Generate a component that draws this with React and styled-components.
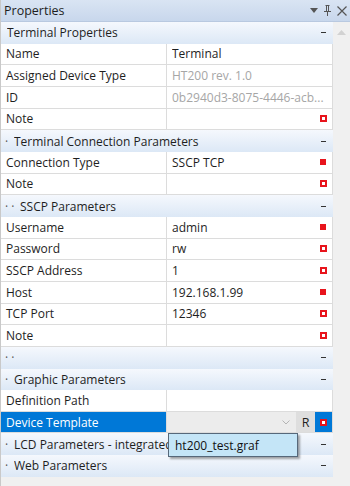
import styled, {createGlobalStyle} from 'styled-components';

const GlobalStyle = createGlobalStyle`
  html, body {
    margin: 0;
    padding: 0;
    background: #f0f0f0;
  }
  body {
    font-family: "Open Sans", "Liberation Sans", sans-serif;
    font-size: 12px;
    color: #1e1e1e;
  }
`;

const ROW_H = '21.667px';

const Panel = styled.div`
  width: 350px;
  height: 486px;
  display: flex;
  flex-direction: column;
  background: #f0f0f0;
  border-left: 1px solid #c9c9c9;
  box-sizing: border-box;
  overflow: hidden;
`;

const TitleBar = styled.div`
  height: 22px;
  flex: none;
  display: flex;
  align-items: center;
  padding: 0 3px 0 3px;
  background: linear-gradient(#d9e4f3, #c8d7ec);
  border-bottom: 1px solid #b9c9e0;
  box-sizing: border-box;
  font-size: 12.5px;
`;

const Title = styled.span`
  flex: 1;
`;

const TitleIcons = styled.div`
  display: flex;
  align-items: center;
  gap: 6px;
  color: #4a4a4a;
`;

const Body = styled.div`
  display: flex;
  position: relative;
`;

const Grid = styled.div`
  width: 333px;
  display: flex;
  flex-direction: column;
`;

const ScrollTrack = styled.div`
  width: 17px;
  display: flex;
  justify-content: center;
  padding-top: 8px;
  box-sizing: border-box;
`;

const Category = styled.div`
  height: ${ROW_H};
  display: flex;
  align-items: center;
  padding: 0 6px;
  background: linear-gradient(#f5f8fd, #dce8f6);
  box-sizing: border-box;
  white-space: nowrap;
  overflow: hidden;
`;

const Dots = styled.span`
  display: inline-block;
  width: ${p => p.$level * 6 + 3}px;
  letter-spacing: 3px;
  color: #555;
  margin-left: -2px;
`;

const CatLabel = styled.span`
  flex: 1;
  overflow: hidden;
`;

const Dash = styled.span`
  width: 5px;
  height: 1px;
  background: #333;
  flex: none;
  margin-right: 1px;
`;

const Row = styled.div`
  height: ${ROW_H};
  display: grid;
  grid-template-columns: 166px 1fr;
  border-bottom: 1px solid #dcdcdc;
  border-right: 1px solid #dcdcdc;
  box-sizing: border-box;
  background: #fff;
`;

const NameCell = styled.div`
  display: flex;
  align-items: center;
  padding-left: 5px;
  border-right: 1px solid #dcdcdc;
  background: ${p => (p.$selected ? '#0078d7' : '#fff')};
  color: ${p => (p.$selected ? '#fff' : '#1e1e1e')};
  white-space: nowrap;
`;

const ValueCell = styled.div`
  display: flex;
  align-items: center;
  padding-left: 5px;
  padding-right: 5px;
  color: ${p => (p.$disabled ? '#a6a6a6' : '#1e1e1e')};
  white-space: nowrap;
  overflow: hidden;
`;

const ValueText = styled.span`
  flex: 1;
  overflow: hidden;
  text-overflow: ellipsis;
`;

const Marker = styled.span`
  width: 7px;
  height: 7px;
  flex: none;
  box-sizing: border-box;
  background: ${p => (p.$filled ? '#e8141c' : '#fff')};
  border: ${p => (p.$filled ? '0' : '2px solid #e8141c')};
  ${p => p.$filled && 'width: 6px; height: 6px; margin-right: 1px;'}
`;

const EditorCell = styled.div`
  display: flex;
  align-items: stretch;
`;

const Combo = styled.div`
  flex: 1;
  display: flex;
  align-items: center;
  justify-content: flex-end;
  padding-right: 6px;
  background: #ececec;
`;

const RButton = styled.div`
  width: 19px;
  display: flex;
  align-items: center;
  justify-content: center;
  background: #dedede;
  font-size: 12.5px;
`;

const BlueMarkerCell = styled.div`
  width: 17px;
  display: flex;
  align-items: center;
  justify-content: center;
  background: #0078d7;
`;

// open drop-down list of the Device Template editor, lies over the LCD row
const Popup = styled.div`
  position: absolute;
  left: 167px;
  top: 411px;
  width: 130px;
  height: 24px;
  display: flex;
  align-items: center;
  padding-left: 6px;
  box-sizing: border-box;
  background: #c4e5f7;
  border: 1px solid #56687a;
  box-shadow: 2px 2px 2px rgba(0, 0, 0, 0.35);
  font-size: 12px;
  color: #111;
`;

const Chevron = () => (
  <svg width="8" height="5" viewBox="0 0 8 5">
    <path d="M0.5 0.5 L4 4 L7.5 0.5" fill="none" stroke="#b4b4b4" strokeWidth="1" />
  </svg>
);

const UpArrow = () => (
  <svg width="9" height="5" viewBox="0 0 9 5">
    <path d="M0 5 L4.5 0 L9 5 Z" fill="#d2d2d2" />
  </svg>
);

const sections = [
  {type: 'cat', level: 0, label: 'Terminal Properties'},
  {name: 'Name', value: 'Terminal'},
  {name: 'Assigned Device Type', value: 'HT200 rev. 1.0', disabled: true},
  {name: 'ID', value: '0b2940d3-8075-4446-acb...', disabled: true},
  {name: 'Note', marker: 'empty'},
  {type: 'cat', level: 1, label: 'Terminal Connection Parameters'},
  {name: 'Connection Type', value: 'SSCP TCP', marker: 'filled'},
  {name: 'Note', marker: 'empty'},
  {type: 'cat', level: 2, label: 'SSCP Parameters'},
  {name: 'Username', value: 'admin', marker: 'filled'},
  {name: 'Password', value: 'rw', marker: 'empty'},
  {name: 'SSCP Address', value: '1', marker: 'empty'},
  {name: 'Host', value: '192.168.1.99', marker: 'filled'},
  {name: 'TCP Port', value: '12346', marker: 'empty'},
  {name: 'Note', marker: 'empty'},
  {type: 'cat', level: 2, label: ''},
  {type: 'cat', level: 1, label: 'Graphic Parameters'},
  {name: 'Definition Path'},
  {type: 'editor', name: 'Device Template'},
  {type: 'cat', level: 1, label: 'LCD Parameters - integrated display'},
  {type: 'cat', level: 1, label: 'Web Parameters'},
];

const App = () => (
  <>
    <GlobalStyle />
    <Panel>
      <TitleBar>
        <Title>Properties</Title>
        <TitleIcons>
          <svg width="8" height="5" viewBox="0 0 8 5">
            <path d="M0 0 L8 0 L4 5 Z" fill="#555" />
          </svg>
          <svg width="7" height="11" viewBox="0 0 7 11">
            <path d="M1.5 0.5 H5.5 M2.5 0.5 V6 M4.5 0.5 V6 M0 6.5 H7 M3.5 6.5 V11" stroke="#555" strokeWidth="1" fill="none" />
          </svg>
          <svg width="10" height="10" viewBox="0 0 10 10">
            <path d="M0.5 0.5 L9.5 9.5 M9.5 0.5 L0.5 9.5" stroke="#555" strokeWidth="1.2" />
          </svg>
        </TitleIcons>
      </TitleBar>
      <Body>
        <Grid>
          {sections.map((s, i) => {
            if (s.type === 'cat') {
              return (
                <Category key={i}>
                  {s.level > 0 && <Dots $level={s.level}>{'·'.repeat(s.level)}</Dots>}
                  <CatLabel>{s.label}</CatLabel>
                  <Dash />
                </Category>
              );
            }
            if (s.type === 'editor') {
              return (
                <Row key={i}>
                  <NameCell $selected>{s.name}</NameCell>
                  <EditorCell>
                    <Combo>
                      <Chevron />
                    </Combo>
                    <RButton>R</RButton>
                    <BlueMarkerCell>
                      <Marker />
                    </BlueMarkerCell>
                  </EditorCell>
                </Row>
              );
            }
            return (
              <Row key={i}>
                <NameCell>{s.name}</NameCell>
                <ValueCell $disabled={s.disabled}>
                  <ValueText>{s.value}</ValueText>
                  {s.marker && <Marker $filled={s.marker === 'filled'} />}
                </ValueCell>
              </Row>
            );
          })}
        </Grid>
        <ScrollTrack>
          <UpArrow />
        </ScrollTrack>
        <Popup>ht200_test.graf</Popup>
      </Body>
    </Panel>
  </>
);

export default App;
